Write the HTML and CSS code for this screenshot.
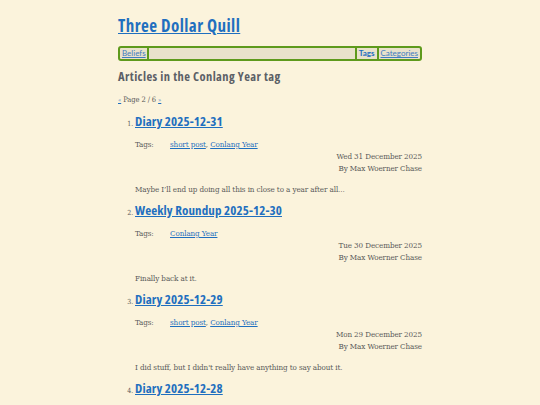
FILE: index.html
```html
<!DOCTYPE html>
<html lang="en">
<head>
<meta charset="utf-8">
<title>Three Dollar Quill</title>
<link rel="stylesheet" href="styles.css">
</head>
<body>
<div class="page">
  <h1 class="site-title"><a href="#">Three Dollar Quill</a></h1>
  <nav class="nav">
    <div class="nav-left"><a href="#">Beliefs</a></div>
    <div class="nav-right"><span class="current">Tags</span><a href="#">Categories</a></div>
  </nav>
  <h2 class="tag-heading">Articles in the Conlang Year tag</h2>
  <p class="pager"><a href="#">«</a> Page 2 / 6 <a href="#">»</a></p>
  <ol class="articles" start="1">
    <li class="article">
      <h3 class="article-title"><a href="#">Diary 2025-12-31</a></h3>
      <div class="tags"><span class="tags-label">Tags:</span><span><a href="#">short post</a>, <a href="#">Conlang Year</a></span></div>
      <div class="meta"><div>Wed 31 December 2025</div><div>By Max Woerner Chase</div></div>
      <p class="summary">Maybe I’ll end up doing all this in close to a year after all...</p>
    </li>
    <li class="article">
      <h3 class="article-title"><a href="#">Weekly Roundup 2025-12-30</a></h3>
      <div class="tags"><span class="tags-label">Tags:</span><span><a href="#">Conlang Year</a></span></div>
      <div class="meta"><div>Tue 30 December 2025</div><div>By Max Woerner Chase</div></div>
      <p class="summary">Finally back at it.</p>
    </li>
    <li class="article">
      <h3 class="article-title"><a href="#">Diary 2025-12-29</a></h3>
      <div class="tags"><span class="tags-label">Tags:</span><span><a href="#">short post</a>, <a href="#">Conlang Year</a></span></div>
      <div class="meta"><div>Mon 29 December 2025</div><div>By Max Woerner Chase</div></div>
      <p class="summary">I did stuff, but I didn't really have anything to say about it.</p>
    </li>
    <li class="article">
      <h3 class="article-title"><a href="#">Diary 2025-12-28</a></h3>
      <div class="tags"><span class="tags-label">Tags:</span><span><a href="#">short post</a>, <a href="#">Conlang Year</a></span></div>
      <div class="meta"><div>Sun 28 December 2025</div><div>By Max Woerner Chase</div></div>
      <p class="summary">More progress.</p>
    </li>
  </ol>
</div>
</body>
</html>
```

FILE: styles.css
```css
html, body {
  margin: 0;
  padding: 0;
  background: #fbf3dc;
}
body {
  font-family: "DejaVu Serif", serif;
  font-stretch: condensed;
  color: #5a5a5a;
  font-size: 8px;
  letter-spacing: -0.1px;
}
a {
  color: #1f6fbf;
}
.page {
  width: 304px;
  margin: 0 auto;
  padding-top: 14px;
}
.site-title {
  font-family: "Open Sans", sans-serif;
  font-stretch: condensed;
  font-size: 17px;
  font-weight: 700;
  letter-spacing: 0.45px;
  margin: 0 0 8px 0;
  line-height: 24px;
}
.site-title a {
  color: #1f6fbf;
}
.nav {
  display: flex;
  justify-content: space-between;
  background: #e9e2cb;
  border: 2px solid #5e9a1c;
  border-radius: 3px;
  height: 11px;
  font-family: Lato, sans-serif;
  font-stretch: normal;
  font-size: 8px;
  letter-spacing: 0;
  line-height: 11px;
}
.nav a {
  color: #3f7cc0;
}
.nav-left {
  padding-left: 2px;
  border-right: 2px solid #5e9a1c;
  padding-right: 1px;
}
.nav-right {
  display: flex;
}
.nav-right > * {
  border-left: 2px solid #5e9a1c;
  padding: 0 2px;
}
.nav-right .current {
  font-weight: 700;
  color: #1f6fbf;
}
.tag-heading {
  font-family: "Open Sans", sans-serif;
  font-stretch: condensed;
  font-size: 12.5px;
  font-weight: 700;
  letter-spacing: 0.42px;
  color: #5b6066;
  margin: 7px 0 0 0;
  line-height: 18px;
}
.pager {
  margin: 9px 0 0 0;
  line-height: 10px;
  font-size: 7.5px;
}
.pager a {
  font-size: 6px;
}
.articles {
  margin: 7px 0 0 0;
  padding-left: 17px;
  list-style: decimal;
}
.article {
  font-size: 8px;
  height: 89px;
}
.article::marker {
  font-size: 7px;
}
.article-title {
  font-family: "Open Sans", sans-serif;
  font-stretch: condensed;
  font-size: 13px;
  font-weight: 700;
  letter-spacing: 0.12px;
  margin: 0;
  line-height: 18px;
}
.tags {
  display: flex;
  margin-top: 9px;
  line-height: 12px;
}
.tags-label {
  width: 35px;
}
.meta {
  text-align: right;
  line-height: 12px;
}
.summary {
  margin: 9px 0 0 0;
  line-height: 12px;
}
```
